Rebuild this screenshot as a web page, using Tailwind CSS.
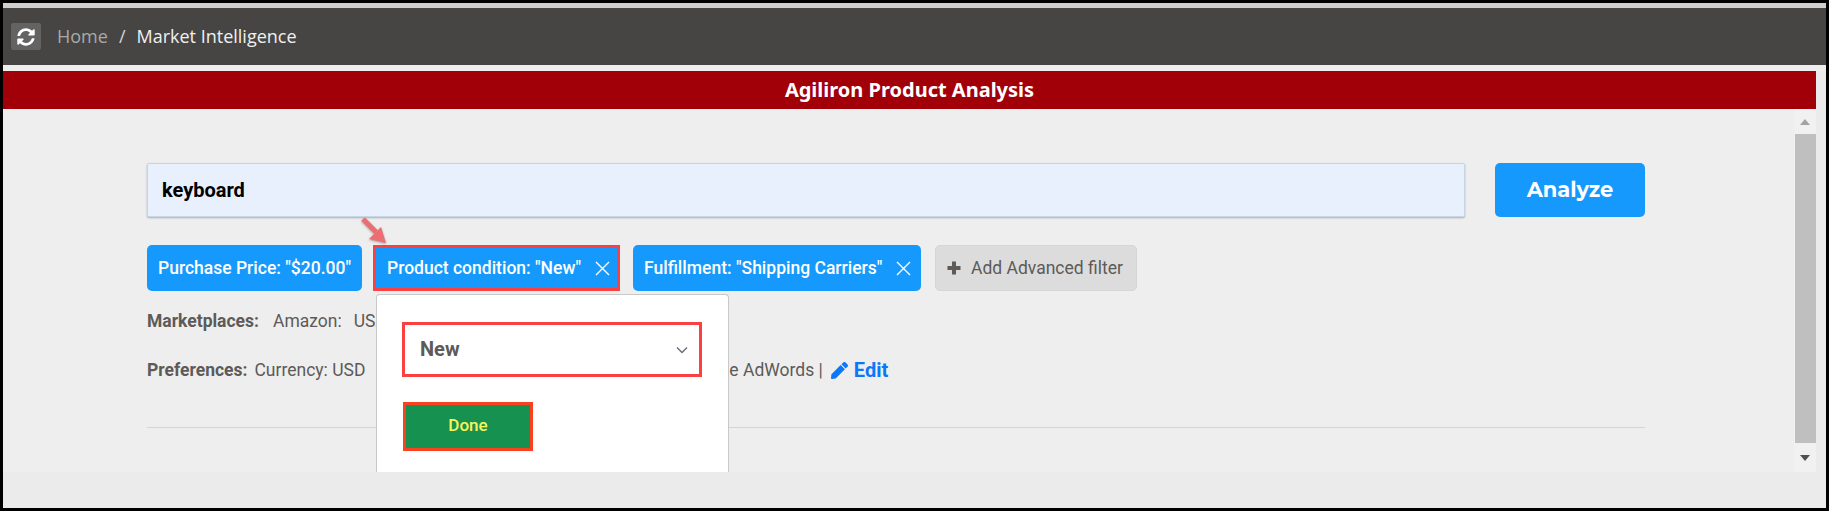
<!DOCTYPE html>
<html lang="en">
<head>
    <meta charset="UTF-8">
    <title>Market Intelligence</title>
    <script src="https://cdn.jsdelivr.net/npm/@tailwindcss/browser@4"></script>
</head>
<body class="bg-black overflow-hidden font-['Roboto',sans-serif]">
    <div class="h-[511px] pt-[3px] pl-[3px] pr-[3px] pb-[3px]">
        <div class="h-[505px] bg-[#ebebeb] flex flex-col">
            <div class="h-[5px] bg-[#cfcfcf]"></div>

            <!-- Breadcrumb -->
            <nav class="h-[57px] bg-[#464543] flex items-center pl-[8px] font-['Open_Sans',sans-serif] text-[18px]">
                <button class="w-[30px] h-[27px] rounded-[2px] bg-[#636363] flex items-center justify-center">
                    <svg width="18" height="18" viewBox="0 0 512 512" fill="#fff"><path d="M370.7 133.3C339.5 104 298.9 88 255.800 88c-77.500 0-144.400 53.100-162.900 126.900-1.300 5.400-6.100 9.100-11.600 9.100H24.100c-7.500 0-13.200-6.800-11.800-14.200C33.900 94.900 134.800 8 256 8c66.400 0 126.800 26.100 171.300 68.700L463 41c15.100-15.100 41-4.400 41 17v134c0 13.300-10.700 24-24 24H346c-21.400 0-32.100-25.900-17-41l41.700-41.700zM32 296h134c21.400 0 32.100 25.900 17 41l-41.700 41.700c31.200 29.300 71.800 45.300 114.900 45.300 77.500 0 144.400-53.100 162.900-126.900 1.300-5.400 6.100-9.100 11.600-9.100h57.300c7.500 0 13.200 6.800 11.800 14.200C478.100 417.100 377.200 504 256 504c-66.400 0-126.800-26.100-171.300-68.700L49 471c-15.100 15.100-41 4.400-41-17V320c0-13.300 10.700-24 24-24z"/></svg>
                </button>
                <span class="ml-[16px] text-[#a9a9a9]">Home</span>
                <span class="ml-[11px] text-[#d5d5d5]">/</span>
                <span class="ml-[11px] text-[#f0f0f0]">Market Intelligence</span>
            </nav>

            <div class="h-[6px] bg-[#eeeeee]"></div>

            <!-- Title -->
            <div class="h-[38px] mr-[10px] bg-[#a20009] flex items-center justify-center font-['Noto_Sans',sans-serif] font-bold text-[20px] text-white">Agiliron Product Analysis</div>

            <div class="h-[363px] flex mr-[10px] bg-[#eeeeee] overflow-hidden">
                <main class="w-[1791px] pl-[144px] pt-[54px]">
                    <div class="flex gap-[30px]">
                        <div class="w-[1318px] h-[54px] bg-[#e8f0fe] border border-[#c9d6e2] shadow-[0_1px_2px_#9fb0bd] rounded-[2px] flex items-center pl-[14px] font-bold text-[20px] text-black">keyboard</div>
                        <button class="w-[150px] h-[54px] rounded-[5px] bg-[#1699fc] text-white font-['Montserrat','Inter',sans-serif] font-bold text-[21px]">Analyze</button>
                    </div>

                    <!-- Filter chips -->
                    <div class="relative flex items-center mt-[28px] h-[46px] font-medium text-[17.500px] text-white whitespace-nowrap">
                        <div class="w-[215px] h-[46px] rounded-[5px] bg-[#1699fc] flex items-center pl-[11px]">Purchase Price: "$20.00"</div>
                        <div class="ml-[11px] w-[247px] h-[46px] bg-[#1699fc] border-[3px] border-[#fa4040] flex items-center pl-[11px]">
                            <span>Product condition: "New"</span>
                            <svg class="ml-[14px]" width="15" height="15" viewBox="0 0 15 15" stroke="#fff" stroke-width="1.400" fill="none"><path d="M1 1l13 13M14 1L1 14"/></svg>
                        </div>
                        <div class="ml-[13px] w-[288px] h-[46px] rounded-[5px] bg-[#1699fc] flex items-center pl-[11px]">
                            <span>Fulfillment: "Shipping Carriers"</span>
                            <svg class="ml-[14px]" width="15" height="15" viewBox="0 0 15 15" stroke="#fff" stroke-width="1.400" fill="none"><path d="M1 1l13 13M14 1L1 14"/></svg>
                        </div>
                        <div class="ml-[14px] w-[202px] h-[46px] rounded-[5px] bg-[#dcdcdc] border border-[#d5d5d5] flex items-center pl-[11px] font-normal text-[#5d5a58]">
                            <svg width="14" height="14" viewBox="0 0 14 14" fill="#5d5a58"><path d="M5 .5h4V5h4.500v4H9v4.500H5V9H.5V5H5z"/></svg>
                            <span class="ml-[10px]">Add Advanced filter</span>
                        </div>

                        <!-- Arrow annotation -->
                        <svg class="absolute left-[213px] top-[-27px] drop-shadow-[0_1px_1px_rgba(120,60,60,0.5)]" width="30" height="30" viewBox="0 0 30 30"><path d="M3 1L16 14" stroke="#ea6e74" stroke-width="5"/><path d="M26 25L9 21 21 9z" fill="#ea6e74"/></svg>

                        <!-- Filter popover -->
                        <div class="absolute left-[229px] top-[49px] w-[353px] h-[180px] bg-white border border-b-0 border-[#c8c8c8] rounded-t-[4px] pl-[25px] pt-[27px] text-[#5d5a58]">
                            <div class="w-[300px] h-[55px] border-[3px] border-[#fa4040] flex items-center justify-between pl-[15px] pr-[11px] font-bold text-[20px]">
                                <span class="mb-[2px]">New</span>
                                <svg width="12" height="8" viewBox="0 0 12 8" stroke="#6b6f78" stroke-width="1.500" fill="none"><path d="M1 1.500l5 5 5-5"/></svg>
                            </div>
                            <button class="block mt-[25px] ml-[1px] w-[130px] h-[49px] pb-[2px] bg-[#17914f] border-[3px] border-[#f8421f] font-medium text-[17px] text-[#f8f55a]">Done</button>
                        </div>
                    </div>

                    <div class="mt-[20px] h-[20px] flex items-center text-[17.500px] text-[#5d5a58] whitespace-nowrap">
                        <span class="font-bold">Marketplaces:</span>
                        <span class="ml-[14px]">Amazon:</span>
                        <span class="ml-[12px]">USA</span>
                    </div>

                    <div class="mt-[29px] h-[20px] flex items-center text-[17.500px] text-[#5d5a58] whitespace-nowrap">
                        <span class="font-bold">Preferences:</span>
                        <span class="ml-[7px]">Currency: USD</span>
                        <span class="ml-[318px]">Google AdWords |</span>
                        <svg class="ml-[8px]" width="17" height="17" viewBox="0 0 512 512" fill="#0b78f8"><path d="M290.700 93.200l128 128-278 278-114.100 12.600C11.300 513.500-1.600 500.600.1 485.300l12.700-114.200 277.900-277.900zm207.200-19.100l-60.100-60.100c-18.700-18.700-49.100-18.700-67.900 0l-56.500 56.500 128 128 56.500-56.500c18.800-18.800 18.800-49.100 0-67.900z"/></svg>
                        <span class="ml-[6px] font-bold text-[20px] text-[#0b78f8]">Edit</span>
                    </div>

                    <div class="mt-[47px] w-[1498px] h-[1px] bg-[#d4d4d4]"></div>
                </main>

                <!-- Scrollbar -->
                <div class="w-[22px] flex flex-col items-center bg-[#f1f1f1]">
                    <div class="h-[25px] flex items-center justify-center">
                        <div class="w-0 h-0 border-x-[5.500px] border-x-transparent border-b-[6px] border-b-[#a3a3a3]"></div>
                    </div>
                    <div class="w-[21px] h-[309px] bg-[#bfbfbf]"></div>
                    <div class="h-[29px] flex items-center justify-center">
                        <div class="w-0 h-0 border-x-[5.500px] border-x-transparent border-t-[6px] border-t-[#505050]"></div>
                    </div>
                </div>
            </div>
        </div>
    </div>
</body>
</html>
